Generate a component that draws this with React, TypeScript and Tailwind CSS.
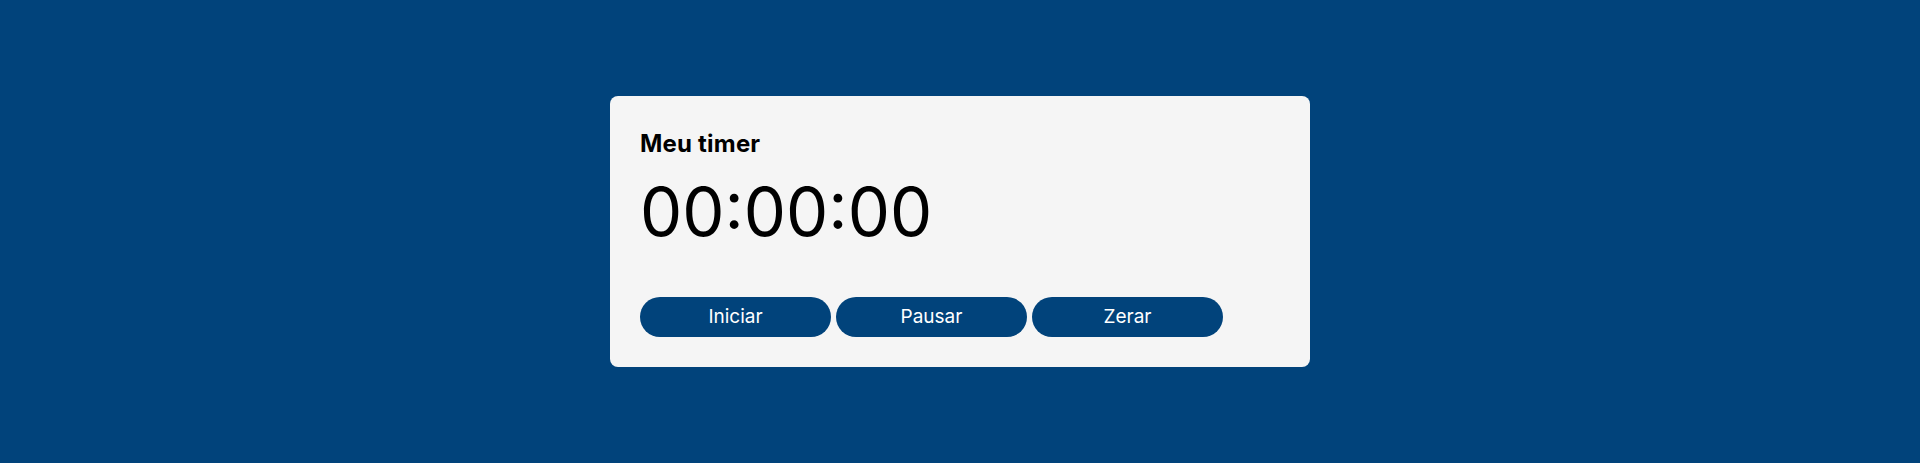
export default function App() {
  const buttons = ["Iniciar", "Pausar", "Zerar"];
  return (
    <div className="flex h-[463px] w-full items-center justify-center bg-[#01437b] font-['Inter',sans-serif]">
      <div className="flex w-[700px] flex-col rounded-lg bg-[#f5f5f5] px-[30px] pt-[30px] pb-[30px]">
        <h2 className="text-[24px] font-bold leading-[36px] tracking-[0.2px] text-black">Meu timer</h2>
        <div className="mt-[10px] text-[67px] font-normal leading-[80px] text-black">
          00:00:00
        </div>
        <div className="mt-[45px] flex gap-[5px]">
          {buttons.map((b) => (
            <button
              key={b}
              className="h-10 w-[191px] rounded-full bg-[#01437b] text-[19px] text-white"
            >
              {b}
            </button>
          ))}
        </div>
      </div>
    </div>
  );
}
